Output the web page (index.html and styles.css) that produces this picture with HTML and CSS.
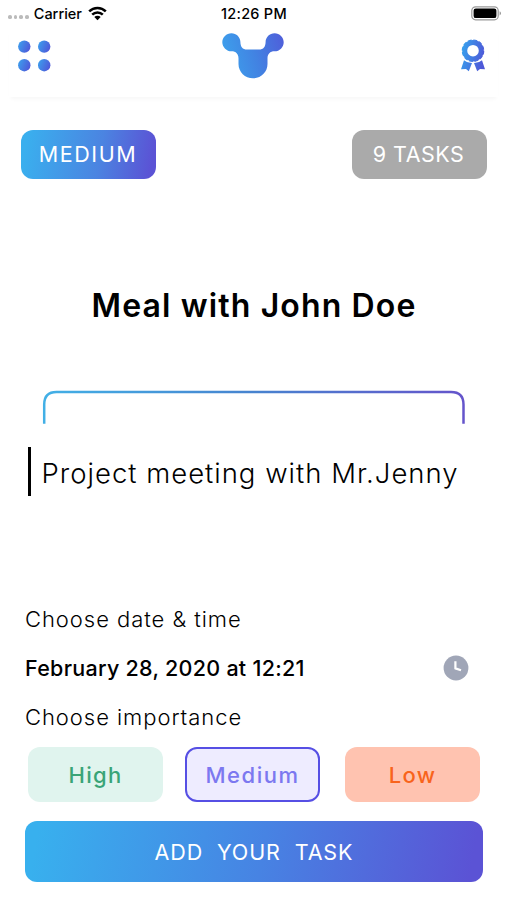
FILE: index.html
```html
<!DOCTYPE html>
<html lang="en">
<head>
<meta charset="UTF-8" />
<meta name="viewport" content="width=device-width, initial-scale=1" />
<title>Add Task</title>
<link rel="stylesheet" href="styles.css">
</head>
<body>

<div class="status-bar">
  <div class="status-left">
    <span class="signal"><i></i><i></i><i></i><i></i></span>
    <span class="carrier">Carrier</span>
    <svg class="wifi" width="19" height="15" viewBox="0 0 19 15">
      <g fill="none" stroke="#000" stroke-width="2.5">
        <path d="M1.2 5.4a11.7 11.7 0 0 1 16.6 0" />
        <path d="M4.2 8.6a7.5 7.5 0 0 1 10.6 0" />
      </g>
      <path d="M6.3 11a4.5 4.5 0 0 1 6.4 0L9.5 14.3z" />
    </svg>
  </div>
  <div class="clock-time">12:26 PM</div>
  <svg class="battery" width="31" height="15" viewBox="0 0 31 15">
    <rect x="0.8" y="0.8" width="26.4" height="13" rx="3.8" fill="none" stroke="#999" stroke-width="1.2" />
    <rect x="2.6" y="2.5" width="22.8" height="9.6" rx="2.2" />
    <path d="M28.6 5.2v4.2q1.4-.6 1.4-2.1t-1.4-2.1z" fill="#999" />
  </svg>
</div>

<header class="navbar">
  <svg class="menu-icon" width="34" height="34" viewBox="0 0 34 34">
    <defs>
      <linearGradient id="dot" x1="0" y1="0.3" x2="1" y2="0.7">
        <stop offset="0" stop-color="#3c9cec" />
        <stop offset="1" stop-color="#5056d8" />
      </linearGradient>
    </defs>
    <g fill="url(#dot)">
      <circle cx="7.3" cy="7.6" r="6.2" />
      <circle cx="27.2" cy="7.6" r="6.2" />
      <circle cx="7.3" cy="26.2" r="6.2" />
      <circle cx="27.2" cy="26.2" r="6.2" />
    </g>
  </svg>
  <svg class="logo" width="62" height="46" viewBox="0 0 62 46">
    <defs>
      <linearGradient id="brand" x1="0" y1="0.35" x2="1" y2="0.15">
        <stop offset="0" stop-color="#3d9fec" />
        <stop offset="0.5" stop-color="#4282e2" />
        <stop offset="1" stop-color="#4f5fda" />
      </linearGradient>
    </defs>
    <path fill="url(#brand)" d="M9.400.2C14.400.2 18.400 4.200 18.400 9C18.400 13.500 20.500 16.600 25 16.600H37C41.500 16.600 43.600 13.500 43.600 9C43.600 4.200 47.600.2 52.600.2S61.700 4.200 61.700 9.200S57.600 18.300 52.600 18.300C48 18.300 45.500 21 45.500 25.500V31C45.500 39 39 45.300 31 45.300S16.500 39 16.500 31V25.500C16.500 21 14 18.300 9.400 18.300S.3 14.200.3 9.200S4.400.2 9.400.2z" />
  </svg>
  <svg class="award" width="26" height="34" viewBox="0 0 26 34">
    <defs>
      <linearGradient id="badge" gradientUnits="userSpaceOnUse" x1="2" y1="12" x2="24" y2="17">
        <stop offset="0" stop-color="#389eec" />
        <stop offset="1" stop-color="#4e58d8" />
      </linearGradient>
    </defs>
    <circle cx="13" cy="11.700" r="8.300" fill="none" stroke="url(#badge)" stroke-width="5" />
    <circle cx="13" cy="11.700" r="10.700" fill="none" stroke="url(#badge)" stroke-width="1.200" stroke-dasharray="3.900 1.700" />
    <path fill="url(#badge)" d="M4 21.200Q7 24 12 23.900L8.800 32.300L6 29.900L1 30.300zM22 21.200Q19 24 14 23.900L17.200 32.300L20 29.900L25 30.300z" />
  </svg>
</header>

<main class="content">
  <div class="chips">
    <div class="chip chip-level"><span>MEDIUM</span></div>
    <div class="chip chip-count"><span>9 TASKS</span></div>
  </div>

  <h1 class="task-title">Meal with John Doe</h1>

  <svg class="bracket" width="424" height="35" viewBox="0 0 424 35">
    <defs>
      <linearGradient id="line" gradientUnits="userSpaceOnUse" x1="0" y1="0" x2="424" y2="0">
        <stop offset="0" stop-color="#42b0e6" />
        <stop offset="0.5" stop-color="#4783cf" />
        <stop offset="1" stop-color="#6554cb" />
      </linearGradient>
    </defs>
    <path d="M2.200 33.700V14.500Q2.200 2 14.500 2H409Q421.500 2 421.500 14.500V33.700" fill="none" stroke="url(#line)" stroke-width="2.500" />
  </svg>

  <div class="task-input">
    <span class="caret"></span>
    <span class="task-text">Project meeting with Mr.Jenny</span>
  </div>

  <div class="form">
    <div class="label label-date">Choose date &amp; time</div>
    <div class="date-row">
      <span class="date">February 28, 2020 at 12:21</span>
      <svg width="26" height="26" viewBox="0 0 26 26">
        <circle cx="13" cy="13" r="12.400" fill="#a0a6b7" />
        <path d="M12.400 6.200V13.400L18 15.300" fill="none" stroke="#fff" stroke-width="2.200" stroke-linejoin="round" />
      </svg>
    </div>
    <div class="label label-importance">Choose importance</div>
  </div>

  <div class="importance">
    <button class="level high"><span>High</span></button>
    <button class="level medium"><span>Medium</span></button>
    <button class="level low"><span>Low</span></button>
  </div>

  <button class="submit"><span>ADD&nbsp; YOUR&nbsp; TASK</span></button>
</main>

</body>
</html>
```
FILE: styles.css
```css
* { box-sizing: border-box; }
body {
  margin: 0; width: 507px; height: 900px; overflow: hidden;
  background: #fff; color: #000;
  font-family: Inter, "Liberation Sans", sans-serif;
}
button { font-family: inherit; border: none; padding: 0; cursor: pointer; }
svg { display: block; flex: none; }
span { white-space: nowrap; }

.status-bar {
  display: grid; grid-template-columns: 1fr auto 1fr; align-items: center;
  height: 26px; padding: 0 5px 0 8px;
  font-size: 14.5px; font-weight: 500;
}
.status-left { display: flex; align-items: center; }
.signal { display: flex; gap: 2px; margin: 8px 5px 0 0; }
.signal i { width: 3.7px; height: 3.7px; border-radius: 50%; background: #bbb; }
.wifi { margin-left: 6px; }
.clock-time { letter-spacing: 0.25px; margin-right: 2px; }
.battery { justify-self: end; }

.navbar {
  display: grid; grid-template-columns: 1fr auto 1fr; align-items: start;
  height: 71px; margin: 0 9px; padding: 7px 12px 0 8px;
  box-shadow: 0 4px 4px -2px #f7f7f7;
}
.menu-icon { margin-top: 6px; }
.logo { margin-right: -3px; }
.award { margin-top: 6px; justify-self: end; }

.content { padding: 33px 20px 0 21px; }
.chips { display: flex; justify-content: space-between; }
.chip {
  display: flex; align-items: center; justify-content: center;
  width: 135px; height: 49px; border-radius: 12px; padding-bottom: 1px;
  color: #fff; font-size: 21.5px;
}
.chip-level { letter-spacing: 1.6px; background: linear-gradient(100deg, #3aafee 5%, #4b84e1 58%, #5b53d5 95%); }
.chip-level span { margin-right: 1px; }
.chip-count { letter-spacing: 0.5px; background: #aaa; }
.chip-count span { margin-right: 2px; }

.task-title {
  margin: 106px 0 0; text-align: center;
  font-size: 32px; line-height: 41px; font-weight: 600; letter-spacing: 1.13px;
}
.bracket { margin: 64px 0 0 21px; }
.task-input { display: flex; align-items: center; height: 49px; margin: 22px 0 0 7px; }
.caret { width: 2.5px; height: 49px; background: #000; }
.task-text { margin: 3px 0 0 11px; font-size: 27.5px; font-weight: 300; letter-spacing: 1px; }

.form { margin: 108px 0 0 4px; }
.label { height: 30px; line-height: 30px; font-size: 22px; font-weight: 300; letter-spacing: 0.95px; }
.date-row {
  display: flex; justify-content: space-between; align-items: center;
  height: 26px; margin: 21px 18px 21px 0;
}
.date { font-size: 21.5px; font-weight: 500; letter-spacing: 0.28px; }

.importance { display: flex; margin: 15px 7px 0; }
.level { width: 135px; height: 55px; border-radius: 12px; font-size: 22px; font-weight: 500; letter-spacing: 1.3px; }
.high { background: #e0f4ee; color: #39a477; }
.medium { margin: 0 25px 0 22px; background: #eeecff; color: #7c78f0; border: 2px solid #564fe4; letter-spacing: 1.5px; }
.low { background: #ffc3b0; color: #f8641c; }

.submit {
  display: block; width: 458px; height: 61px; margin: 19px 0 0 4px;
  border-radius: 12px; color: #fff; font-size: 21.5px; letter-spacing: 0.9px;
  background: linear-gradient(100deg, #38b0ee 3%, #4783e3 52%, #5b53d5 97%);
}
```
